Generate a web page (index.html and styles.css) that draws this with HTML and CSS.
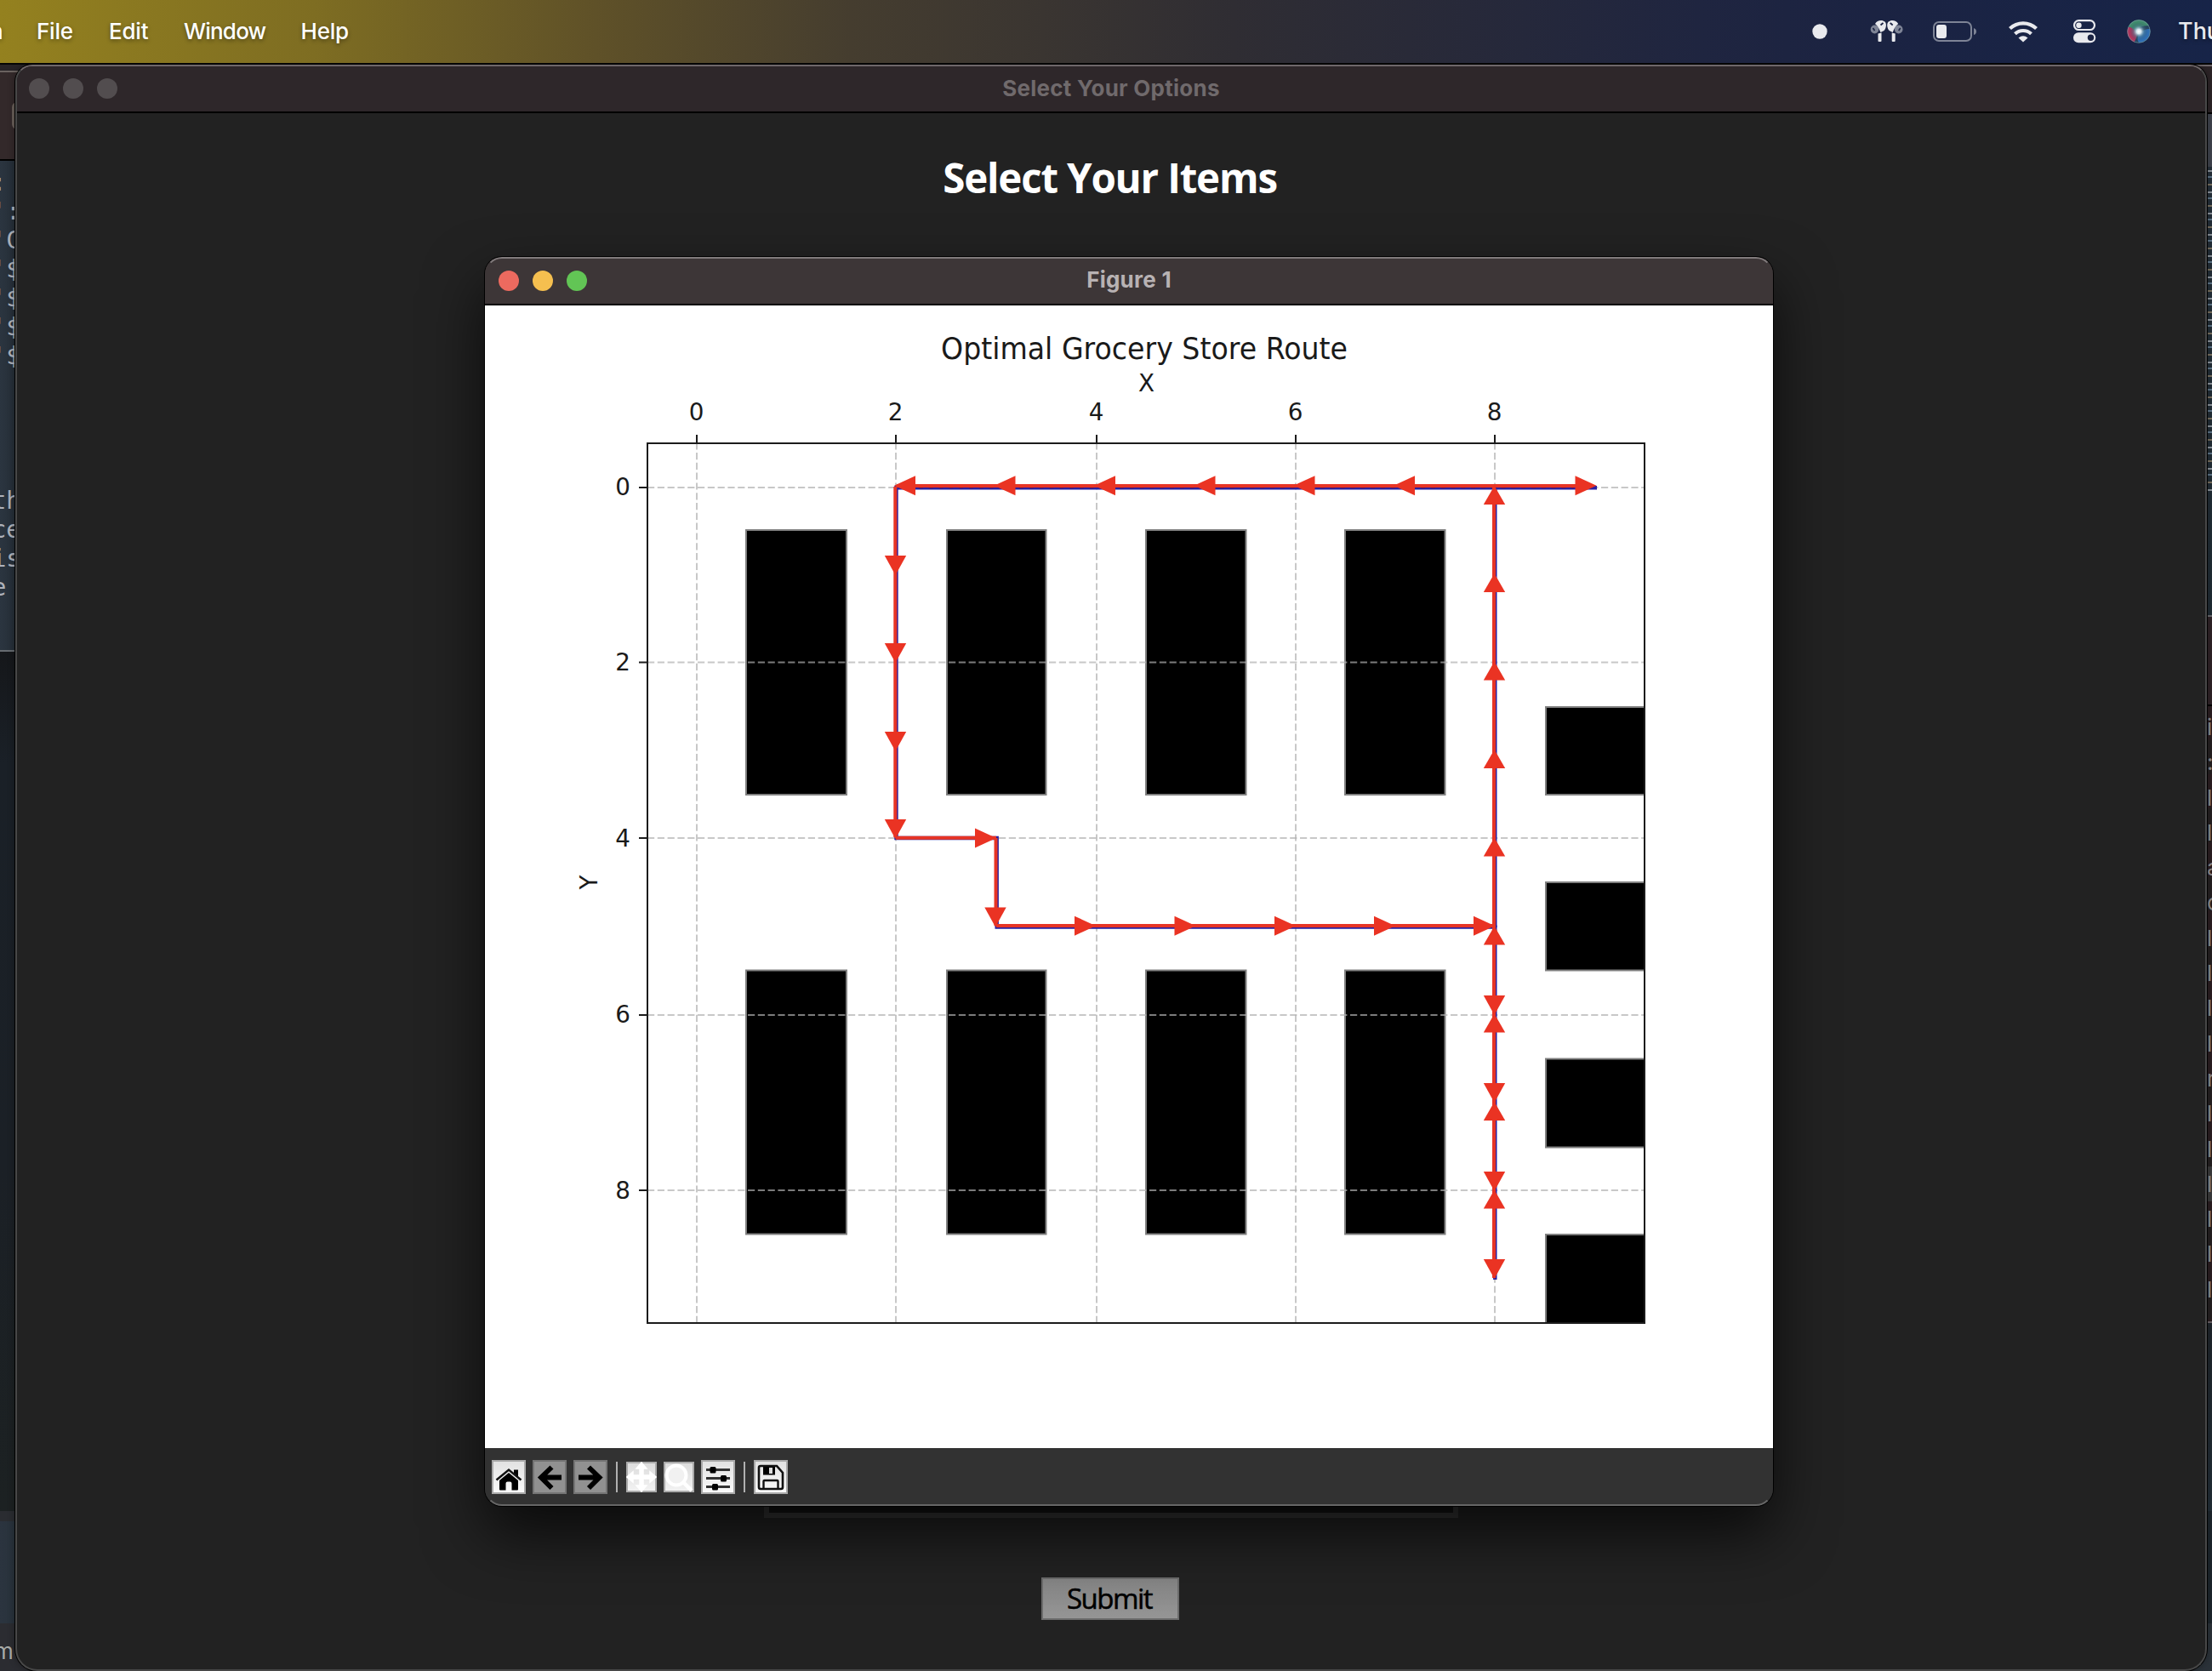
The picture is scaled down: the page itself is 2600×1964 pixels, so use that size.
FILE: index.html
```html
<!DOCTYPE html>
<html lang="en">
<head>
<meta charset="utf-8">
<title>Select Your Options</title>
<link rel="stylesheet" href="styles.css">
</head>
<body>
<header class="menubar">
  <nav class="menus">
    <span class="menu menu-app">n</span><span class="menu menu-file">File</span><span class="menu menu-edit">Edit</span><span class="menu menu-window">Window</span><span class="menu menu-help">Help</span>
  </nav>
  <div class="status">
    <svg class="status-icons" width="470" height="75" viewBox="2080 0 470 75">
      <g fill="#e9eaee">
        <circle cx="2139" cy="37" r="8.7"/>
        <g id="bud">
          <ellipse cx="2203.5" cy="34.5" rx="4.8" ry="5" fill="#7e8496"/>
          <path d="M2201.5 33l2 3" stroke="#1b2342" stroke-width="1.6"/>
          <path d="M2204 28c2-4 8-5.500 11.500-2.500 2.500 2.500 1.500 8-1 10.500l-4 2c-1.500-3-2.500-7-6.500-10z"/>
          <path d="M2210.500 29.500l3-2.500" stroke="#1b2342" stroke-width="1.800"/>
          <path d="M2207.500 39.500l4-1v9.500q0 1-1 1h-2q-1 0-1-1z"/>
        </g>
        <use href="#bud" transform="translate(4435.200 0) scale(-1 1)"/>
        <rect x="2273" y="26" width="44" height="22" rx="6" fill="none" stroke="#7e8496" stroke-width="2"/>
        <path d="M2320 33q3 1 3 4t-3 4z" fill="#7e8496"/>
        <rect x="2276" y="29" width="12" height="16" rx="3"/>
        <g fill="none" stroke="#e9eaee" stroke-width="4.200">
          <path d="M2362.500 33.500a22.500 22.500 0 0 1 31 0"/>
          <path d="M2368.500 39.700a14 14 0 0 1 19 0"/>
        </g>
        <path d="M2372.500 44.500q5.500-4.500 11 0l-5.500 5z"/>
        <rect x="2438" y="24.200" width="24" height="10.800" rx="5.400" fill="none" stroke="#e9eaee" stroke-width="2.200"/>
        <circle cx="2443.500" cy="29.700" r="3.200"/>
        <rect x="2437" y="38.300" width="26.200" height="12" rx="6"/>
        <circle cx="2457.500" cy="44.300" r="3.700" fill="#1b2342"/>
      </g>
      <defs>
        <radialGradient id="orb"><stop offset="0" stop-color="#fff"/><stop offset=".25" stop-color="#d4e6ef"/><stop offset=".6" stop-color="#4f7f94" stop-opacity=".5"/><stop offset="1" stop-color="#27405c" stop-opacity="0"/></radialGradient>
      </defs>
      <circle cx="2514" cy="37" r="13.500" fill="#27455f"/>
      <path d="M2502 31a13.500 13.500 0 0 1 24-1q-12 0-16 7z" fill="#3f8a6c"/>
      <path d="M2501.500 32a13.500 13.500 0 0 0 7 17.500q5-8 2-12-4-6-9-5.500z" fill="#b0375f"/>
      <path d="M2527 34a13 13 0 0 1-13 16q-3-4 0-9 6-8 13-7z" fill="#2f6fb4"/>
      <circle cx="2514" cy="37" r="11" fill="url(#orb)"/>
      <circle cx="2514" cy="37" r="13.300" fill="none" stroke="#7da2a5" stroke-opacity=".6"/>
    </svg>
    <span class="menu clock">Thu</span>
  </div>
</header>

<main class="desktop">
  <section class="behind-left">
    <div class="bl-top"></div>
    <div class="bl-bar"><i class="bl-field"></i></div>
    <div class="bl-code"><pre>:
':
'C
'$
'$
'$
'$




th
ce
is
e</pre></div>
    <div class="bl-gap"></div>
    <div class="bl-line"></div>
    <div class="bl-panel"></div>
    <div class="bl-foot">m</div>
  </section>

  <section class="behind-right">
    <div class="br-bar"></div>
    <div class="br-tab"></div>
    <div class="br-map"></div>
    <div class="br-head"></div>
    <div class="br-list"><span>i</span><span>:</span><span>l</span><span>l</span><span>a</span><span>o</span><span>l</span><span>l</span><span>l</span><span>l</span><span>r</span><span>l</span><span>l</span><span class="selected">l</span><span>l</span><span>l</span><span>l</span></div>
    <div class="br-deep"></div>
    <div class="br-deeper"></div>
    <div class="br-last"></div>
  </section>

  <section class="window options">
    <div class="titlebar">
      <div class="lights"><i></i><i></i><i></i></div>
      <span class="title">Select Your Options</span>
    </div>
    <div class="options-body">
      <h1>Select Your Items</h1>
      <div class="listbox"></div>
      <button class="submit"><span>Submit</span></button>
    </div>
  </section>

  <section class="window figure">
    <div class="titlebar">
      <div class="lights"><i class="close"></i><i class="minimize"></i><i class="expand"></i></div>
      <span class="title">Figure 1</span>
    </div>
    <svg class="plot" width="1514" height="1343" viewBox="570 359 1514 1343">
      <defs>
        <path id="aR" d="M0 0L-25-11.500V11.500Z"/>
        <path id="aL" d="M0 0L25-11.500V11.500Z"/>
        <path id="aD" d="M0 1L-12.700-22H12.700Z"/>
        <path id="aU" d="M0-1L-12.700 21H12.700Z"/>
      </defs>
      <g stroke="#808080" stroke-width="2">
        <path d="M877 623h118v311h-118zM1113 623h116.500v311h-116.500zM1347 623h117.500v311h-117.500zM1581 623h117.500v311h-117.500z"/>
        <path d="M877 1140.500h118v310h-118zM1113 1140.500h116.500v310h-116.500zM1347 1140.500h117.500v310h-117.500zM1581 1140.500h117.500v310h-117.500z"/>
        <path d="M1817 831h116v103h-116zM1817 1037h116v103.500h-116zM1817 1244.500h116v104h-116zM1817 1451h116v104h-116z"/>
      </g>
      <g stroke="#b0b0b0" stroke-opacity=".7" stroke-width="2" stroke-dasharray="8.200 3.600" fill="none">
        <path d="M819 1555V521M1053 1555V521M1289 1555V521M1523 1555V521M1757 1555V521"/>
        <path d="M761 573H1933M761 778.500H1933M761 985H1933M761 1193H1933M761 1399H1933"/>
      </g>
      <path d="M1877 573.300H1053.500V985H1171.700V1089.600H1757.300V1504" fill="none" stroke="#2a20a0" stroke-width="4.400"/>
      <path d="M1757.300 1090V573" fill="none" stroke="#2a20a0" stroke-width="4.400"/>
      <path d="M1080 573H1850" stroke="#5f1450" stroke-width="2" stroke-dasharray="5 6.800"/>
      <g fill="none" stroke="#e73425" stroke-width="4">
        <path d="M1872 571H1054M1052.300 572V984M1053 984.700H1171M1170.500 985V1088M1171 1088H1755M1756 573V1502"/>
      </g>
      <g fill="#ea3323">
        <use href="#aR" x="1876.500" y="570.700"/>
        <use href="#aL" x="1051" y="570.700"/><use href="#aL" x="1168.500" y="570.700"/><use href="#aL" x="1286" y="570.700"/><use href="#aL" x="1403.500" y="570.700"/><use href="#aL" x="1520.500" y="570.700"/><use href="#aL" x="1638" y="570.700"/>
        <use href="#aD" x="1052.500" y="675"/><use href="#aD" x="1052.500" y="778"/><use href="#aD" x="1052.500" y="882"/><use href="#aD" x="1052.500" y="985"/>
        <use href="#aR" x="1171" y="985"/>
        <use href="#aD" x="1170" y="1088.500"/>
        <use href="#aR" x="1288" y="1088.200"/><use href="#aR" x="1405.500" y="1088.200"/><use href="#aR" x="1523" y="1088.200"/><use href="#aR" x="1640" y="1088.200"/><use href="#aR" x="1757" y="1088.200"/>
        <use href="#aD" x="1756.500" y="1192"/><use href="#aD" x="1756.500" y="1295"/><use href="#aD" x="1756.500" y="1399"/><use href="#aD" x="1756.500" y="1502"/>
        <use href="#aU" x="1756.500" y="572"/><use href="#aU" x="1756.500" y="675"/><use href="#aU" x="1756.500" y="778.500"/><use href="#aU" x="1756.500" y="882"/><use href="#aU" x="1756.500" y="985.500"/><use href="#aU" x="1756.500" y="1089.500"/><use href="#aU" x="1756.500" y="1192.500"/><use href="#aU" x="1756.500" y="1296"/><use href="#aU" x="1756.500" y="1399.500"/>
      </g>
      <g fill="none" stroke="#1b1b1b" stroke-width="2">
        <path d="M761 521H1933V1555H761Z"/>
        <path d="M819 521v-10M1053 521v-10M1289 521v-10M1523 521v-10M1757 521v-10"/>
        <path d="M761 573h-10M761 778.500h-10M761 985h-10M761 1193h-10M761 1399h-10"/>
      </g>
      <g class="ticks" text-anchor="middle">
        <text x="818.500" y="493.500">0</text><text x="1052.500" y="493.500">2</text><text x="1288.500" y="493.500">4</text><text x="1522.500" y="493.500">6</text><text x="1756.500" y="493.500">8</text>
        <text x="1347.500" y="459.500">X</text>
        <text x="702" y="1037" transform="rotate(-90 702 1037)">Y</text>
      </g>
      <g class="ticks" text-anchor="end">
        <text x="741" y="582">0</text><text x="741" y="788">2</text><text x="741" y="994.500">4</text><text x="741" y="1201.500">6</text><text x="741" y="1408.500">8</text>
      </g>
      <text class="plot-title" x="1106" y="421.500" textLength="478" lengthAdjust="spacingAndGlyphs">Optimal Grocery Store Route</text>
    </svg>
    <div class="toolbar">
      <span class="tool"><svg viewBox="0 0 40 40"><path d="M9 24L20 15l11 9v10.500q0 1-1 1h-6.500v-8q0-2-2-2h-3q-2 0-2 2v8H10q-1 0-1-1z"/><path d="M5.500 23.500L20 11.500 34.500 23.500" fill="none" stroke="#111" stroke-width="2.500"/><path d="M26 11.500h5v8l-5-4z"/></svg></span>
      <span class="tool dim"><svg viewBox="0 0 40 40"><path d="M22.500 8.500L10 20.500 22.500 33M10 20.500H34" fill="none" stroke="#000" stroke-width="5.800"/></svg></span>
      <span class="tool dim"><svg viewBox="0 0 40 40"><path d="M18 8.500L30.500 20.500 18 33M30 20.500H6" fill="none" stroke="#000" stroke-width="5.800"/></svg></span>
      <i class="sep"></i>
      <span class="tool flat"><svg viewBox="0 0 36 36"><path d="M18 1l6 7h-4v8h8v-4l7 6-7 6v-4h-8v8h4l-6 7-6-7h4v-8H8v4l-7-6 7-6v4h8V8h-4z" fill="#fff" stroke="#fff" stroke-width="1.500"/></svg></span>
      <span class="tool flat"><svg viewBox="0 0 36 36"><circle cx="15" cy="16" r="11.500" fill="#f1f1f1" stroke="#fff" stroke-width="4"/><path d="M23 24l10 10" stroke="#fff" stroke-width="4.500"/></svg></span>
      <span class="tool"><svg viewBox="0 0 40 40"><path d="M6 11.500h28M6 21.500h28M6 31.500h28" stroke="#333" stroke-width="3"/><rect x="10.500" y="8" width="7" height="7.500" rx="1.500"/><rect x="23" y="18" width="7" height="7.500" rx="1.500"/><rect x="13" y="28" width="7" height="7.500" rx="1.500"/></svg></span>
      <i class="sep"></i>
      <span class="tool"><svg viewBox="0 0 40 40"><path d="M8 7h19l7 8v17q0 2-2 2H8q-2 0-2-2V9q0-2 2-2z" fill="none" stroke="#111" stroke-width="2.600"/><path d="M11 8h14v9.500H11z"/><path d="M18 9h4v7h-4z" fill="#ddd"/><path d="M11.500 33v-8q0-1 1-1h15q1 0 1 1v8" fill="none" stroke="#111" stroke-width="2.400"/></svg></span>
    </div>
    <div class="frame"></div>
  </section>
</main>
</body>
</html>
```

FILE: styles.css
```css
* { box-sizing: border-box; }

body {
  margin: 0;
  width: 2600px;
  height: 1964px;
  overflow: hidden;
  background: #000;
  font-family: Inter, "Liberation Sans", sans-serif;
}

i { font-style: normal; display: block; }

/* Menu bar */
.menubar {
  height: 76px;
  display: flex;
  justify-content: space-between;
  overflow: hidden;
  border-bottom: 2px solid #050505;
  background: linear-gradient(90deg, #94811f 0, #7e6d22 370px, #5f5128 700px, #453d2f 1000px, #2f2d33 1450px, #1f2540 2000px, #1b2342 2200px, #172448 2600px);
}
.menus, .status { display: flex; align-items: center; white-space: nowrap; }
.menus { width: 700px; }
.menu {
  font-size: 26px;
  font-weight: 500;
  line-height: 74px;
  color: #fff;
  text-shadow: 0 2px 5px rgba(0, 0, 0, .4);
}
.menu-app { width: 43px; text-indent: -12px; }
.menu-file { width: 85px; }
.menu-edit { width: 88px; }
.menu-window { width: 137.5px; }
.menu-file, .menu-edit, .menu-help { letter-spacing: -.2px; }
.menu-window { letter-spacing: -.8px; }
.status { width: 520px; overflow: hidden; }
.status-icons { flex: none; }
.clock { flex: none; padding-left: 10px; color: #e9eaee; font-size: 27px; }

/* Desktop */
.desktop { position: relative; height: 1888px; overflow: hidden; }

.window { position: absolute; overflow: hidden; }
.titlebar {
  position: relative;
  display: flex;
  align-items: center;
  justify-content: center;
  border-bottom: 2px solid #000;
}
.title {
  margin-top: -2px;
  font-size: 26px;
  font-weight: 700;
  letter-spacing: .25px;
  white-space: nowrap;
}
.lights { position: absolute; display: flex; gap: 16px; }
.lights i { width: 24px; height: 24px; border-radius: 50%; background: #524d4f; }
.lights .close { background: #ed6a5f; }
.lights .minimize { background: #f5bf4f; }
.lights .expand { background: #62c555; }

.options {
  left: 18px;
  top: 0;
  width: 2576px;
  height: 1888px;
  border: 2px solid #484848;
  border-top-color: #6f676a;
  border-radius: 20px 20px 26px 26px;
  background: #222;
  box-shadow: 0 0 0 1px #000, 0 0 10px rgba(0, 0, 0, .4);
}
.options .titlebar { height: 55px; background: #2e272a; }
.options .lights { left: 14px; top: 14px; }
.options .title { color: #706a6c; }
.options-body { display: flex; flex-direction: column; align-items: center; }
h1 {
  margin: 41px 0 0 -3px;
  height: 71px;
  font: 700 47.5px/70px "Open Sans", "Noto Sans", sans-serif;
  letter-spacing: -1.2px;
  color: #fff;
  white-space: nowrap;
}
.listbox {
  width: 816px;
  height: 1480px;
  margin-top: 59px;
  border: 6px solid #373737;
  background: #141414;
}
.submit {
  width: 162px;
  height: 50px;
  margin: 70px 0 0 -2px;
  padding: 0;
  border: 2px solid #6c6c6c;
  border-radius: 0;
  background: linear-gradient(#858585, #959595);
  font: 500 33px/44px "Open Sans", "Noto Sans", sans-serif;
  letter-spacing: -1.5px;
  -webkit-text-stroke: .5px #000;
  color: #000;
}
.submit span { display: block; margin-left: -2px; }

.figure {
  left: 570px;
  top: 226px;
  width: 1514px;
  height: 1468px;
  border-radius: 20px;
  display: flex;
  flex-direction: column;
  box-shadow: 0 0 0 1px #000, 0 32px 70px rgba(0, 0, 0, .7);
}
.figure .titlebar { height: 57px; background: #3d3637; }
.figure .lights { left: 16px; top: 16px; }
.figure .title { color: #b8b2b3; }
.plot { display: block; background: #fff; flex: none; }
.ticks { font: 27.8px "DejaVu Sans", sans-serif; fill: #1a1a1a; }
.plot-title { font: 35px "DejaVu Sans", sans-serif; fill: #1a1a1a; }
.frame {
  position: absolute;
  inset: 0;
  border: 2px solid #777;
  border-color: #807a7b #6660 #666 #6660;
  border-radius: 20px;
}

.toolbar {
  height: 68px;
  padding: 0 8px;
  display: flex;
  align-items: center;
  background: #323232;
}
.tool {
  width: 40px;
  height: 40px;
  margin-right: 8px;
  border: 2px solid #aaa;
  background: linear-gradient(#e2e2e2, #fafafa);
}
.tool svg { display: block; margin: -2px; width: 40px; height: 40px; }
.tool.dim { background: #919191; border-color: #747474; }
.tool.flat { width: 36px; height: 36px; background: linear-gradient(#dcdcdc, #f2f2f2); }
.tool.flat svg { width: 36px; height: 36px; }
.sep { width: 2px; height: 36px; margin: 0 10px 0 2px; background: #b0b0b0; }

/* Windows behind, left edge */
.behind-left {
  position: absolute;
  left: 0;
  top: 0;
  width: 40px;
  height: 1888px;
  overflow: hidden;
  display: flex;
  flex-direction: column;
}
.behind-left > div { flex: none; }
.bl-top { height: 9px; background: #272327; border-bottom: 2px solid #6a625f; }
.bl-bar { height: 104px; background: #33292a; border-bottom: 2px solid #000; padding: 35px 0 0 14px; }
.bl-field { width: 30px; height: 32px; border: 3px solid #6a605a; border-radius: 6px; }
.bl-code {
  height: 577px;
  padding-top: 9px;
  background: linear-gradient(90deg, #2b3540, #252e37 18px);
  border-bottom: 2px solid #666b70;
  overflow: hidden;
}
.bl-code pre {
  margin: 0 0 0 -9.5px;
  font: 28px/34px "DejaVu Sans Mono", monospace;
  color: #aeb2bb;
}
.bl-gap { height: 1010px; background: linear-gradient(#15171a, #1a2027 130px, #1b2026 600px, #1c2122); }
.bl-line { height: 12px; background: #2a2c31; }
.bl-panel { height: 120px; background: linear-gradient(90deg, #2b343f, #28323b 18px); }
.bl-foot { height: 56px; background: #2b2c31; font: 26px/66px Inter, sans-serif; text-indent: -7px; color: #a9aba9; }

/* Windows behind, right edge */
.behind-right {
  position: absolute;
  right: 0;
  top: 0;
  width: 26px;
  height: 1888px;
  overflow: hidden;
  display: flex;
  flex-direction: column;
}
.br-bar { height: 58px; background: #2c2427; border-top: 2px solid #6f676a; border-bottom: 2px solid #000; }
.br-tab { height: 62px; background: #40444e; }
.br-map {
  height: 529px;
  border-bottom: 2px solid #6a6a6e;
  background:
    repeating-linear-gradient(#8d949c 0 2px, transparent 2px 7px, #5d7487 7px 9px, transparent 9px 16px, #79705f 16px 18px, transparent 18px 25px) 0 4px / 100% 380px no-repeat,
    linear-gradient(#25303a, #202c34);
}
.br-head { height: 105px; background: #2f2327; border-bottom: 2px solid #000; }
.br-list { height: 725px; padding-top: 4px; background: repeating-linear-gradient(#2b1e22 0 40px, #252021 40px 80px); border-bottom: 2px solid #6a6266; }
.br-list span {
  display: block;
  height: 41.3px;
  padding-left: 20px;
  font: 26px/41.3px Inter, sans-serif;
  color: #8f8c8d;
}
.br-list .selected { background: #3b3b3c; }
.br-deep { height: 221px; background: linear-gradient(#1f252b, #222e37); }
.br-deeper { height: 132px; background: #1d262d; }
.br-last { flex: 1; background: #2b3239; }
```
